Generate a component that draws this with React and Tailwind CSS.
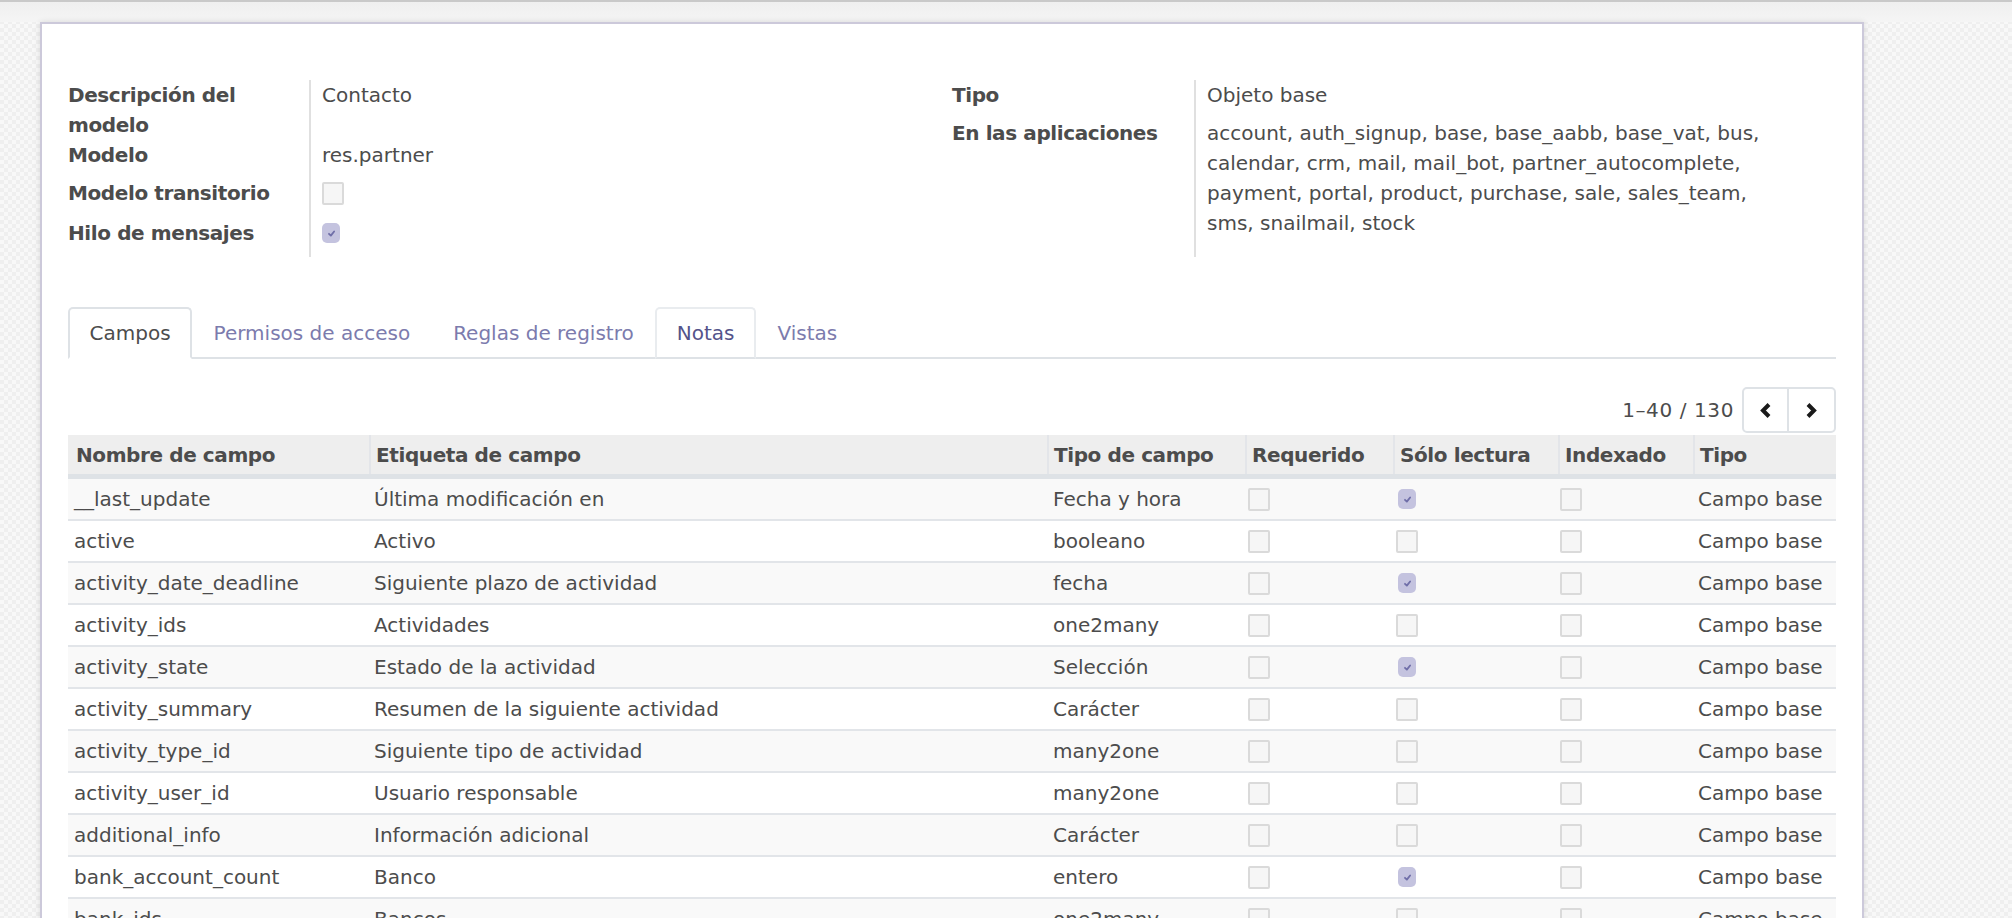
import React from 'react';

const fields = [
  ['__last_update', 'Última modificación en', 'Fecha y hora', true],
  ['active', 'Activo', 'booleano', false],
  ['activity_date_deadline', 'Siguiente plazo de actividad', 'fecha', true],
  ['activity_ids', 'Actividades', 'one2many', false],
  ['activity_state', 'Estado de la actividad', 'Selección', true],
  ['activity_summary', 'Resumen de la siguiente actividad', 'Carácter', false],
  ['activity_type_id', 'Siguiente tipo de actividad', 'many2one', false],
  ['activity_user_id', 'Usuario responsable', 'many2one', false],
  ['additional_info', 'Información adicional', 'Carácter', false],
  ['bank_account_count', 'Banco', 'entero', true],
  ['bank_ids', 'Bancos', 'one2many', false],
];

const apps = [
  'account, auth_signup, base, base_aabb, base_vat, bus,',
  'calendar, crm, mail, mail_bot, partner_autocomplete,',
  'payment, portal, product, purchase, sale, sales_team,',
  'sms, snailmail, stock',
];

function Check({ checked }) {
  if (checked) {
    return (
      <span className="flex h-[20px] w-[18px] items-center justify-center rounded-[5px] bg-[#c4c3df]">
        <svg width="9" height="9" viewBox="0 0 10 10">
          <path d="M2.2 5.3 L4.3 7.4 L7.9 2.8" fill="none" stroke="#6f6ea8" strokeWidth="2" strokeLinecap="round" strokeLinejoin="round" />
        </svg>
      </span>
    );
  }
  return <span className="block h-[23px] w-[22px] rounded-[2px] border-2 border-[#dadada] bg-[#f6f6f6]" />;
}

function Tab({ label, state }) {
  const base = 'flex h-[52px] items-center rounded-t-[5px] border-2 px-[19.5px] -mb-[2px]';
  if (state === 'active') {
    return <div className={`${base} border-[#dee2e6] border-b-white bg-white text-[#4c4c4c]`}>{label}</div>;
  }
  if (state === 'hover') {
    return <div className={`${base} border-[#e9ecef] border-b-[#dee2e6] text-[#54538a]`}>{label}</div>;
  }
  return <div className={`${base} border-transparent text-[#7c7bad]`}>{label}</div>;
}

const cols = 'grid grid-cols-[301px_678px_198px_148px_165px_135px_143px]';

export default function App() {
  return (
    <div className="h-[918px] w-[2012px] overflow-hidden bg-[#f5f5f5] bg-[image:repeating-conic-gradient(#efefef_0_25%,#f8f8f8_0_50%)] bg-[length:8px_8px] font-['DejaVu_Sans',sans-serif] text-[20px] leading-[30px] text-[#4c4c4c]">
      <div className="h-[2px] bg-[#c9c9c9]" />
      <div className="h-[20px] bg-gradient-to-b from-[#efefef] to-[#f5f5f5]" />
      <div className="pl-[40px]">
        <div className="w-[1824px] border-2 border-[#ccc9da] bg-white px-[26px] pt-[56px] pb-[40px] shadow-[0_0_6px_rgba(0,0,0,0.12)]">
          <div className="grid grid-cols-2">
            <div className="flex">
              <div className="flex w-[241px] flex-col font-bold tracking-[-0.4px]">
                <div className="h-[60px]">Descripción del<br />modelo</div>
                <div className="h-[30px]">Modelo</div>
                <div className="flex h-[46px] items-center">Modelo transitorio</div>
                <div className="flex h-[34px] items-center">Hilo de mensajes</div>
              </div>
              <div className="flex flex-col border-l-2 border-[#e0e0e0] pb-[7px] pl-[11px]">
                <div className="h-[60px]">Contacto</div>
                <div className="h-[30px]">res.partner</div>
                <div className="flex h-[46px] items-center"><Check /></div>
                <div className="flex h-[34px] items-center"><Check checked /></div>
              </div>
            </div>
            <div className="flex">
              <div className="flex w-[242px] flex-col font-bold tracking-[-0.4px]">
                <div className="h-[38px]">Tipo</div>
                <div>En las aplicaciones</div>
              </div>
              <div className="flex flex-col border-l-2 border-[#e0e0e0] pb-[7px] pl-[11px]">
                <div className="h-[38px]">Objeto base</div>
                <div>
                  {apps.map((line) => (
                    <div key={line}>{line}</div>
                  ))}
                </div>
              </div>
            </div>
          </div>

          <div className="mt-[50px] flex border-b-2 border-[#dee2e6]">
            <Tab label="Campos" state="active" />
            <Tab label="Permisos de acceso" />
            <Tab label="Reglas de registro" />
            <Tab label="Notas" state="hover" />
            <Tab label="Vistas" />
          </div>

          <div className="mt-[28px] flex items-center justify-end">
            <span className="mr-[8px] tracking-[0.6px]">1–40 / 130</span>
            <div className="flex h-[46px] rounded-[5px] border-2 border-[#dee2e6]">
              <button className="flex w-[45px] items-center justify-center border-r-2 border-[#dee2e6]">
                <svg width="13" height="17" viewBox="0 0 13 17">
                  <polyline points="10,2.5 4,8.5 10,14.5" fill="none" stroke="#1a1a1a" strokeWidth="4" />
                </svg>
              </button>
              <button className="flex w-[45px] items-center justify-center">
                <svg width="13" height="17" viewBox="0 0 13 17">
                  <polyline points="3,2.5 9,8.5 3,14.5" fill="none" stroke="#1a1a1a" strokeWidth="4" />
                </svg>
              </button>
            </div>
          </div>

          <div className="mt-[2px]">
            <div className={`${cols} h-[44px] border-b-[5px] border-[#dee2e6] bg-[#eeeeee] font-bold tracking-[-0.4px]`}>
              <div className="flex items-center pl-[8px]">Nombre de campo</div>
              <div className="flex items-center border-l-2 border-[#e3e5e9] pl-[5px]">Etiqueta de campo</div>
              <div className="flex items-center border-l-2 border-[#e3e5e9] pl-[5px]">Tipo de campo</div>
              <div className="flex items-center border-l-2 border-[#e3e5e9] pl-[5px]">Requerido</div>
              <div className="flex items-center border-l-2 border-[#e3e5e9] pl-[5px]">Sólo lectura</div>
              <div className="flex items-center border-l-2 border-[#e3e5e9] pl-[5px]">Indexado</div>
              <div className="flex items-center border-l-2 border-[#e3e5e9] pl-[5px]">Tipo</div>
            </div>
            {fields.map(([name, label, type, ro], i) => (
              <div
                key={name}
                className={`${cols} h-[42px] border-b-2 border-[#e2e5e9] ${i % 2 === 0 ? 'bg-[#f9f9f9]' : 'bg-white'}`}
              >
                <div className="flex items-center pl-[6px]">{name}</div>
                <div className="flex items-center pl-[5px]">{label}</div>
                <div className="flex items-center pl-[6px]">{type}</div>
                <div className="flex items-center pl-[3px]"><Check /></div>
                <div className={`flex items-center ${ro ? 'pl-[5px]' : 'pl-[3px]'}`}><Check checked={ro} /></div>
                <div className="flex items-center pl-[2px]"><Check /></div>
                <div className="flex items-center pl-[5px]">Campo base</div>
              </div>
            ))}
          </div>
        </div>
      </div>
    </div>
  );
}
